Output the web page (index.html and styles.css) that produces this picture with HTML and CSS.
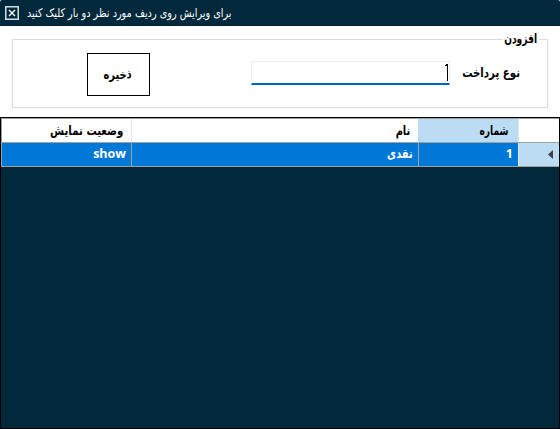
FILE: index.html
```
<!DOCTYPE html>
<html lang="fa">
<head>
<meta charset="utf-8">
<title>نوع پرداخت</title>
<link rel="stylesheet" href="styles.css">
</head>
<body>
<div class="window">
  <header class="titlebar">
    <svg class="close" width="14" height="14" viewBox="0 0 14 14"><rect x=".75" y=".75" width="12.5" height="12.5" fill="none" stroke="#d5dde1" stroke-width="1.5"/><path d="M4 4l6 6M10 4l-6 6" stroke="#fff" stroke-width="1.4"/></svg>
    <span class="title" dir="rtl">برای ویرایش روی ردیف مورد نظر دو بار کلیک کنید</span>
  </header>
  <fieldset class="group" dir="rtl">
    <legend><span class="t tight">افزودن</span></legend>
    <div class="form">
      <label class="t label wide" for="type">نوع پرداخت</label>
      <div class="field" id="type"><svg width="3" height="17" viewBox="0 0 3 17"><path d="M1 0h2v17H2V2H0V1h1z" fill="#000"/></svg></div>
      <button class="save"><span class="t">ذخیره</span></button>
    </div>
  </fieldset>
  <div class="grid" dir="rtl">
    <div class="row head">
      <div class="marker"></div>
      <div class="num"><span class="t tight">شماره</span></div>
      <div class="name"><span class="t">نام</span></div>
      <div class="state"><span class="t wide">وضعیت نمایش</span></div>
    </div>
    <div class="row selected">
      <div class="marker"><svg width="5" height="9" viewBox="0 0 5 9"><path d="M5 0v9L0 4.5z" fill="#404040"/></svg></div>
      <div class="num"><span class="latin">1</span></div>
      <div class="name"><span class="t">نقدی</span></div>
      <div class="state"><span class="latin">show</span></div>
    </div>
  </div>
</div>
</body>
</html>
```
FILE: styles.css
```
* { box-sizing: border-box; }
body { margin: 0; background: #fff; color: #000; font-family: "DejaVu Sans", sans-serif; }
.window { width: 560px; height: 429px; display: flex; flex-direction: column; }
.titlebar { height: 26px; flex: none; background: #02293b; border-radius: 2px 2px 0 0; display: flex; align-items: center; padding-left: 5px; gap: 8px; color: #fff; }
.title { font-size: 12px; line-height: 20px; white-space: nowrap; transform: scaleX(.807); transform-origin: left; }
.t { display: inline-block; font-size: 13px; font-weight: bold; line-height: 18px; white-space: nowrap; transform: scaleX(.76); transform-origin: right; }
.wide { transform: scaleX(.785); }
.tight { transform: scaleX(.7); }
.group { margin: 4px 12px 9px; height: 78px; border: 1px solid #dcdcdc; padding: 0; min-width: 0; }
legend { height: 18px; width: 36px; margin-right: 8px; padding: 0 2px; white-space: nowrap; }
legend .t { display: block; }
.form { display: flex; align-items: flex-start; padding: 13px 27px 0 0; }
.label { width: 70px; margin-top: 3px; }
.field { width: 199px; height: 24px; border: 1px solid #ececec; border-bottom: 2px solid #0067c0; padding: 2px 1px 0; display: flex; }
.save { width: 63px; height: 43px; margin: -8px 101px 0 0; padding: 0; border: 1px solid #000; background: #fff; font-family: inherit; color: #000; }
.save .t { transform-origin: center; position: relative; left: -1px; }
.grid { flex: 1; border: 1px solid #000; background: #02293b; }
.row { display: grid; grid-template-columns: 41px 100px 287px 130px; height: 24px; border-bottom: 1px solid #a0a0a0; }
.head { height: 25px; border-top: 1px solid #a0a0a0; background: #fff; }
.row > div { display: flex; align-items: center; border-left: 1px solid #e5e5e5; padding-right: 5px; }
.head > div { padding-right: 9px; }
.head .name, .head .state { padding-right: 8px; }
.head .num { background: #bcdcf4; border-left-color: #bcdcf4; }
.selected { background: #0078d7; color: #fff; }
.selected > div { border-left-color: #a0a0a0; }
.selected .marker { background: #bcdcf4; border-left-color: #e5e5e5; padding-right: 6px; }
.row .state { border-left: 1px solid #a0a0a0; }
.latin { font: 700 12.5px/20px "Open Sans", sans-serif; padding-bottom: 2px; }
.selected .t { padding-bottom: 2px; }
```
